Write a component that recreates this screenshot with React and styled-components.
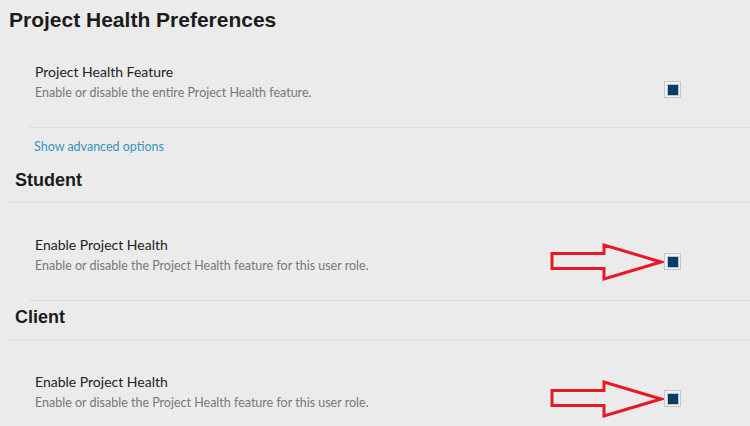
import React from "react";
import styled, { createGlobalStyle } from "styled-components";

const GlobalStyle = createGlobalStyle`
  html, body {
    margin: 0;
    padding: 0;
    background: #ebebeb;
  }
  body {
    font-family: Lato, "Open Sans", sans-serif;
    overflow: hidden;
  }
`;

const Page = styled.div`
  width: 750px;
  height: 426px;
  padding-left: 8px;
  box-sizing: border-box;
  overflow: hidden;
`;

const Title = styled.h1`
  margin: 8px 0 0 1px;
  font-family: "Liberation Sans", Arial, sans-serif;
  font-size: 21px;
  line-height: 24px;
  font-weight: bold;
  color: #1b1b1b;
`;

const Row = styled.div`
  display: flex;
  align-items: flex-start;
  margin-left: 20px;
  padding: ${(p) => (p.$first ? "32px" : "34px")} 69px 26px 7px;
  border-bottom: 1px solid #dcdcdc;
`;

const Text = styled.div`
  flex: 1;
`;

const Label = styled.div`
  font-size: 14px;
  line-height: 16px;
  color: #222;
`;

const Desc = styled.div`
  margin-top: 5px;
  font-size: 12.5px;
  line-height: 16px;
  color: #777;
`;

const Toggle = styled.div`
  position: relative;
  margin-top: ${(p) => (p.$first ? "17px" : "16px")};
  width: 17px;
  height: 17px;
  box-sizing: border-box;
  border: 1px solid #c6c6c6;
  background: #f2f2f2;
  display: flex;
  align-items: center;
  justify-content: center;
`;

const Fill = styled.span`
  width: 10px;
  height: 10px;
  background: #0c3a62;
  box-shadow: 0 0 0 1px #b7c3cf;
`;

const Arrow = styled.svg`
  position: absolute;
  left: -115px;
  top: -11px;
`;

const Advanced = styled.a`
  display: block;
  margin: 11px 0 9px 26px;
  font-size: 12.5px;
  line-height: 16px;
  color: #3596b8;
  text-decoration: none;
`;

const Role = styled.h2`
  margin: 0;
  padding: 6px 0 11px 7px;
  font-family: "Liberation Sans", Arial, sans-serif;
  font-size: 18px;
  line-height: 21px;
  font-weight: bold;
  color: #1b1b1b;
  border-bottom: 1px solid #e2e2e2;
`;

function RedArrow() {
  return (
    <Arrow width="114" height="40" viewBox="0 0 114 40">
      <polygon
        points="2,10.5 54,10.5 54,2 111,19 54,36 54,25.5 2,25.5"
        fill="none"
        stroke="#ea1822"
        strokeWidth="3"
        strokeLinejoin="miter"
      />
    </Arrow>
  );
}

function Setting({ label, desc, first, marked }) {
  return (
    <Row $first={first}>
      <Text>
        <Label>{label}</Label>
        <Desc>{desc}</Desc>
      </Text>
      <Toggle $first={first}>
        <Fill />
        {marked && <RedArrow />}
      </Toggle>
    </Row>
  );
}

const roles = ["Student", "Client"];

export default function App() {
  return (
    <>
      <GlobalStyle />
      <Page>
        <Title>Project Health Preferences</Title>
        <Setting
          first
          label="Project Health Feature"
          desc="Enable or disable the entire Project Health feature."
        />
        <Advanced href="#">Show advanced options</Advanced>
        {roles.map((role) => (
          <div key={role}>
            <Role>{role}</Role>
            <Setting
              marked
              label="Enable Project Health"
              desc="Enable or disable the Project Health feature for this user role."
            />
          </div>
        ))}
      </Page>
    </>
  );
}
